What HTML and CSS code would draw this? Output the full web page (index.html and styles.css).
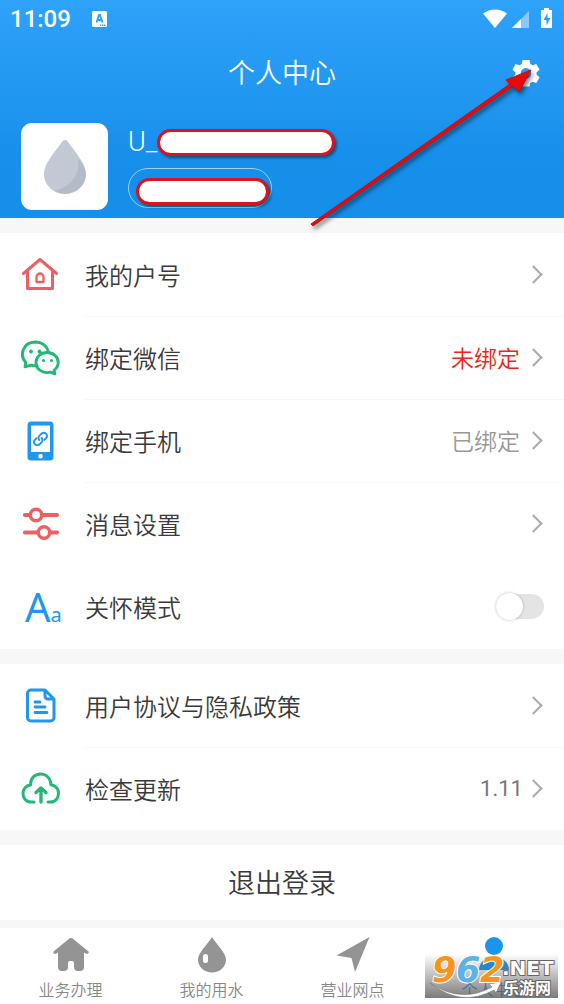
FILE: index.html
```html
<!DOCTYPE html>
<html lang="zh-CN">
<head>
<meta charset="utf-8">
<meta name="viewport" content="width=device-width, initial-scale=1">
<title>个人中心</title>
<link rel="stylesheet" href="styles.css">
</head>
<body>
<div class="app">
  <header class="hero">
    <div class="status">
      <span class="clock">11:09</span>
      <svg class="status-note" width="16" height="16" viewBox="0 0 16 16" aria-hidden="true"><rect width="15" height="16" rx="1.5" fill="#fff"/><path d="M4.500 11.500 7 4h1l2.500 7.500M5.500 9h4" fill="none" stroke="#2a9df5" stroke-width="1.800"/><path d="M8 14.300h5.500" stroke="#2a9df5" stroke-width="1.500" stroke-dasharray="1.300 .7"/></svg>
      <svg class="status-icons" width="72" height="22" viewBox="0 0 72 22" aria-hidden="true">
        <path d="M1 5.500Q13 -2.500 25 5.500L13 20Z" fill="#fff"/>
        <path d="M47 3v17H30Z" fill="#8bc8fa"/><path d="M39 11v9h-9Z" fill="#fff"/>
        <path d="M59 2h3V0h5v2h3v18H59Z" fill="#fff"/><path d="M65.500 5 61.500 12h3v5.500l4-7.500h-3Z" fill="#2a9df5"/>
      </svg>
    </div>
    <div class="titlebar">
      <h1>个人中心</h1>
      <button class="gear" type="button" aria-label="设置">
        <svg width="28" height="28" viewBox="0 0 28 28" aria-hidden="true"><path fill="#fff" fill-rule="evenodd" d="M10.500 1h7l.8 4 2.200 1.300 3.800-1.300 3.300 5.700-3 2.600v2.400l3 2.600-3.300 5.700-3.800-1.300-2.200 1.300-.8 3.500h-7l-.8-3.500-2.200-1.300L3.700 24 .4 18.300l3-2.600v-2.400l-3-2.600L3.700 5l3.800 1.300L9.700 5ZM14 9a5.300 5.300 0 1 0 0 10.600A5.300 5.300 0 0 0 14 9Z"/></svg>
      </button>
    </div>
    <div class="profile">
      <div class="avatar">
        <svg width="44" height="56" viewBox="0 0 44 56" aria-hidden="true"><path d="M22 1c2 0 3 2 4.500 4C33 14 43 25 43 35a21 20 0 0 1-42 0C1 25 11 14 17.500 5 19 3 20 1 22 1Z" fill="#c1c9d4"/><path d="M35 19c5 7 8 12 8 16a21 20 0 0 1-32 16.500C27 49 38 36 35 19Z" fill="#b2bbc7"/></svg>
      </div>
      <div class="identity">
        <div class="name"><span>U_</span><span class="mask mask-name"></span></div>
        <div class="badge"><span class="mask mask-badge"></span></div>
      </div>
    </div>
  </header>

  <main>
    <ul class="group first">
      <li><a class="row" href="#account">
        <svg class="icon" viewBox="0 0 40 40" fill="none" stroke="#ec6062" stroke-width="3" stroke-linecap="round" stroke-linejoin="round" aria-hidden="true"><path d="M3.500 18.500 20 4.500l16.500 14M7.500 16v17.500h25V16"/><path d="M16.500 27v-5a3.500 3.500 0 0 1 7 0v5Z" stroke-width="2.300"/></svg>
        <span class="label">我的户号</span><i class="chevron"></i></a></li>
      <li><a class="row" href="#wechat">
        <svg class="icon" viewBox="0 0 40 40" fill="none" stroke="#22b877" stroke-width="2.900" stroke-linejoin="round" stroke-linecap="round" aria-hidden="true"><path d="M17 27.500c-2 .5-4 .3-6-.3L5 28.800l.8-4.300C-1 17 3 4.500 15 4c7 0 12 4 13.500 10"/><path d="M27 14.500c6.500 0 11.200 4.500 11.200 10 0 3.500-1.800 6-4 7.700l.6 3.700-4.300-1.700C23 36 16 31.500 16 24.500c0-5.500 4.500-10 11-10Z"/><g fill="#22b877" stroke="none"><circle cx="11" cy="13.500" r="1.900"/><circle cx="19.500" cy="13.500" r="1.900"/><circle cx="23.500" cy="22.500" r="1.600"/><circle cx="31.500" cy="22.500" r="1.600"/></g></svg>
        <span class="label">绑定微信</span><span class="value alert">未绑定</span><i class="chevron"></i></a></li>
      <li><a class="row" href="#phone">
        <svg class="icon" viewBox="0 0 40 40" aria-hidden="true"><path fill="#2196ee" fill-rule="evenodd" d="M11 .5h19a3.500 3.500 0 0 1 3.500 3.500v32a3.500 3.500 0 0 1-3.500 3.500H11A3.500 3.500 0 0 1 7.500 36V4A3.500 3.500 0 0 1 11 .5Zm0 4V31h19V4.500ZM20.500 33a2.300 2.300 0 1 0 0 4.600 2.300 2.300 0 0 0 0-4.600Z"/><g transform="rotate(-42 20.500 18)" fill="none" stroke="#2196ee" stroke-width="2" stroke-linecap="round"><path d="M18 14.800h-2a3.200 3.200 0 0 0 0 6.400H19a3 3 0 0 0 3-3.200"/><path d="M23 21.200h2a3.200 3.200 0 0 0 0-6.400H22a3 3 0 0 0-3 3.200"/></g></svg>
        <span class="label">绑定手机</span><span class="value">已绑定</span><i class="chevron"></i></a></li>
      <li><a class="row" href="#messages">
        <svg class="icon" viewBox="0 0 40 40" fill="#fff" stroke="#ec6062" stroke-width="4.200" stroke-linecap="round" aria-hidden="true"><path d="M5 11h32M5 28.500h32"/><circle cx="16" cy="11" r="5.700" stroke-width="3.500"/><circle cx="24" cy="28.500" r="5.700" stroke-width="3.500"/></svg>
        <span class="label">消息设置</span><i class="chevron"></i></a></li>
      <li><label class="row plain">
        <span class="icon letters" aria-hidden="true">A<small>a</small></span>
        <span class="label">关怀模式</span><input class="switch" type="checkbox" role="switch"></label></li>
    </ul>

    <ul class="group">
      <li><a class="row" href="#terms">
        <svg class="icon" viewBox="0 0 40 40" fill="none" stroke="#2196ee" stroke-width="3" stroke-linecap="round" stroke-linejoin="round" aria-hidden="true"><path d="M11 4h14l9 9v18.500a3.500 3.500 0 0 1-3.500 3.500H11a3.500 3.500 0 0 1-3.500-3.500v-24A3.500 3.500 0 0 1 11 4ZM25 4v6a3 3 0 0 0 3 3h6"/><path d="M15 16h5M15 21h10M15 26.500h12" stroke-width="2.800"/></svg>
        <span class="label">用户协议与隐私政策</span><i class="chevron"></i></a></li>
      <li><a class="row" href="#update">
        <svg class="icon" viewBox="0 0 40 40" fill="none" stroke="#22b877" stroke-width="3" stroke-linecap="round" stroke-linejoin="round" aria-hidden="true"><path d="M14 33h-3c-5 0-8-4-8-8.500s3.500-8.500 7.500-8.500C10.500 9.500 14.500 5 20.500 5s10 4.500 10.500 11c4.500 0 7.500 4 7.500 8.500s-3 8.500-8 8.500H28"/><path d="M21 33V19.500M16 23.500l5-4.500 5 4.500" stroke-width="3.400"/></svg>
        <span class="label">检查更新</span><span class="value version">1.11</span><i class="chevron"></i></a></li>
    </ul>

    <button class="logout" type="button">退出登录</button>
  </main>

  <nav class="tabs">
    <a href="#service"><svg width="36" height="36" viewBox="0 0 36 36" fill="#949494" aria-hidden="true"><path d="M18 1q1.200 0 2.500 1.200L35.500 14.500q1 2.500-2 2.500l-2.500-1.500V30q0 4-4 4h-2q-4 0-4-4v-4q0-2-2-2h-2q-2 0-2 2v4q0 4-4 4h-2q-4 0-4-4V15.500L2.500 17q-3 0-2-2.500L15.500 2.200Q16.800 1 18 1Z"/></svg>业务办理</a>
    <a href="#water"><svg width="36" height="36" viewBox="0 0 36 36" aria-hidden="true"><path d="M18 0C23 8 32 16 32 22.500A14 13 0 0 1 4 22.500C4 16 13 8 18 0Z" fill="#949494"/><rect x="9" y="17" width="5" height="9" rx="2.500" fill="#fff"/></svg>我的用水</a>
    <a href="#branches"><svg width="36" height="36" viewBox="0 0 36 36" aria-hidden="true"><path d="M34.500 0 20 35l-3.500-14L1.500 18.500Z" fill="#949494"/></svg>营业网点</a>
    <a class="active" href="#me"><svg width="36" height="36" viewBox="0 0 36 36" fill="#1b94ee" aria-hidden="true"><circle cx="18" cy="9" r="9"/><path d="M3 33c0-8 7-13 15-13s15 5 15 13Z"/></svg>个人中心</a>
    <div class="watermark">
      <svg width="133" height="44" viewBox="0 0 133 44" role="img" aria-label="962.NET 乐游网">
        <path d="M5 29Q36 50 67 33l-3-3 12-2-5 11-2-3Q36 54 5 29Z" fill="#fff" stroke="#777" stroke-width=".6"/>
        <g class="digits"><text x="7" y="28" fill="#f7941d">9</text><text x="31" y="28" fill="#5db2e6">6</text><text x="55" y="28" fill="#f7941d">2</text></g>
        <text class="domain" x="77" y="21">.NET</text>
        <text class="site" x="78" y="40">乐游网</text>
      </svg>
    </div>
  </nav>

  <svg class="pointer" width="240" height="170" viewBox="0 0 240 170" aria-hidden="true"><path d="M11 161 9 159 208 19l-4-4L229 5 217 27l-6-6Z" fill="#e8090d" stroke="#b81318" stroke-width="1" stroke-linejoin="round"/></svg>
</div>
</body>
</html>
```
FILE: styles.css
```css
* {
  box-sizing: border-box;
}

body {
  margin: 0;
  background: #f7f7f7;
  color: #3a3a3a;
  font-family: "Noto Sans CJK SC", sans-serif;
  font-weight: 350;
}

a {
  color: inherit;
  text-decoration: none;
}

button {
  border: 0;
  padding: 0;
  background: none;
  color: inherit;
  font: inherit;
}

svg {
  display: block;
}

.app {
  position: relative;
  min-height: 100vh;
  display: flex;
  flex-direction: column;
}

.hero {
  height: 218px;
  background: linear-gradient(#2fa2fa, #168fea 75%);
  color: #fff;
}

.status {
  display: flex;
  align-items: center;
  height: 38px;
  padding: 0 10px;
}

.clock {
  font-family: Roboto, sans-serif;
  font-size: 24px;
  font-weight: 500;
}

.status-note {
  margin-left: 21px;
}

.status-icons {
  margin-left: auto;
}

.titlebar {
  display: grid;
  grid-template-columns: 1fr auto 1fr;
  align-items: center;
  height: 70px;
  padding: 0 24px;
}

.titlebar h1 {
  grid-column: 2;
  margin: 0;
  padding-bottom: 4px;
  font-size: 27px;
  font-weight: 350;
}

.gear {
  justify-self: end;
}

.profile {
  display: flex;
  gap: 20px;
  padding: 15px 21px 0;
}

.avatar {
  display: grid;
  place-items: center;
  width: 87px;
  height: 87px;
  border-radius: 11px;
  background: #fff;
}

.name {
  display: flex;
  align-items: center;
  height: 38px;
  font-family: Roboto, sans-serif;
  font-size: 27px;
  line-height: 38px;
}

.mask {
  border: 3px solid #d9141b;
  border-radius: 14px;
  background: #fff;
  box-shadow: 2px 2px 3px rgba(0, 0, 0, .45);
}

.mask-name {
  width: 178px;
  height: 27px;
}

.badge {
  display: grid;
  place-items: center;
  width: 144px;
  height: 40px;
  margin-top: 7px;
  padding: 6px 0 0 4px;
  border: 1px solid #9bd1fa;
  border-radius: 20px;
}

.mask-badge {
  width: 133px;
  height: 27px;
}

.group {
  margin: 15px 0 0;
  padding: 0;
  background: #fff;
  list-style: none;
}

.first {
  padding-bottom: 1px;
}

.row {
  display: flex;
  align-items: center;
  height: 83px;
  padding: 0 20px;
}

.group li + li .row:not(.plain) .label::before {
  content: "";
  position: absolute;
  top: 0;
  left: 0;
  width: 100vw;
  border-top: 1px solid #f8f8f8;
}

.icon {
  flex: none;
  width: 40px;
  height: 40px;
  margin-right: 25px;
}

.letters {
  color: #2196ee;
  font: 400 40px/40px "Noto Sans", sans-serif;
  padding-left: 5px;
  white-space: nowrap;
}

.letters small {
  font-size: 20px;
}

.label {
  position: relative;
  flex: 1;
  font-size: 24px;
  line-height: 83px;
}

.group,
main {
  overflow: hidden;
}

.value {
  margin-right: 7px;
  color: #999;
  font-size: 23px;
  line-height: 83px;
}

.alert {
  color: #f02413;
}

.version {
  margin-right: 4px;
  color: #777;
  font-family: Roboto, sans-serif;
  font-size: 22px;
  font-weight: 400;
}

.chevron {
  width: 13px;
  height: 13px;
  margin-right: 4px;
  border: solid #aaa;
  border-width: 2px 2px 0 0;
  transform: rotate(45deg);
}

.switch {
  appearance: none;
  display: flex;
  align-items: center;
  width: 48px;
  height: 25px;
  margin: 0;
  border-radius: 13px;
  background: #e4e4e4;
}

.switch::before {
  content: "";
  width: 27px;
  height: 27px;
  border-radius: 50%;
  background: #fff;
  box-shadow: 0 0 3px rgba(0, 0, 0, .25);
}

.switch:checked {
  background: #2196ee;
  justify-content: flex-end;
}

.logout {
  width: 100%;
  height: 75px;
  margin-top: 15px;
  padding-bottom: 3px;
  background: #fff;
  font-size: 27px;
}

.tabs {
  position: relative;
  flex: 1;
  display: grid;
  grid-template-columns: repeat(4, 1fr);
  margin-top: 8px;
  min-height: 76px;
  padding-top: 9px;
  background: #fff;
  color: #888;
  font-size: 16px;
  line-height: 24px;
}

.tabs a {
  display: flex;
  flex-direction: column;
  align-items: center;
  gap: 4px;
}

.tabs .active {
  color: #1b94ee;
}

.watermark {
  position: absolute;
  right: 6px;
  bottom: 6px;
  background: linear-gradient(rgba(90, 90, 90, 0), rgba(90, 90, 90, .8));
}

.watermark text {
  stroke: #fff;
  paint-order: stroke;
}

.watermark .digits {
  font: italic bold 35px "DejaVu Sans", sans-serif;
  stroke-width: 2px;
}

.watermark .domain,
.watermark .site {
  fill: #fff;
  stroke: #666;
  stroke-width: 2px;
}

.watermark .domain {
  font: bold 20px "DejaVu Sans", sans-serif;
}

.watermark .site {
  font: bold 16px "Noto Sans CJK SC", sans-serif;
}

.pointer {
  position: absolute;
  top: 65px;
  left: 302px;
  filter: drop-shadow(2px 3px 2px rgba(0, 0, 0, .5));
  pointer-events: none;
}
```
